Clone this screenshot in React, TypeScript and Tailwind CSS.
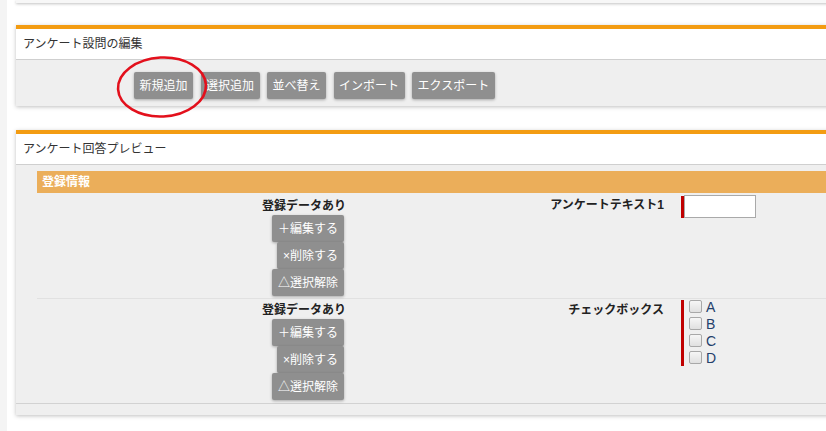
import React from 'react';

const font = { fontFamily: '"Liberation Sans", "Noto Sans CJK JP", sans-serif' };

function GrayButton({ children, className = '' }: { children: React.ReactNode; className?: string }) {
  return (
    <div
      className={`h-[27px] flex items-center bg-[#8f8f8f] text-white text-[12px] rounded-[2px] shadow-[0_1px_3px_rgba(0,0,0,0.3)] whitespace-nowrap ${className}`}
    >
      {children}
    </div>
  );
}

function PanelHeader({ title }: { title: string }) {
  return (
    <div className="h-[31px] flex items-center pl-[7px] text-[12px] text-[#333] bg-white border-b border-[#cfcfcf]">
      {title}
    </div>
  );
}

function RowActions() {
  return (
    <div className="flex flex-col items-end w-[72px] ml-[8px]">
      <GrayButton className="px-[6px]">＋編集する</GrayButton>
      <GrayButton className="px-[6px]">×削除する</GrayButton>
      <GrayButton className="px-[6px]">△選択解除</GrayButton>
    </div>
  );
}

function Checkbox({ label }: { label: string }) {
  return (
    <div className="h-[17px] flex items-center">
      <span className="w-[13px] h-[13px] rounded-[2px] border border-[#a8a8a8] bg-gradient-to-b from-[#f6f6f6] to-[#e0e0e0]" />
      <span className="ml-[4px] text-[14px] text-[#24406b] leading-none">{label}</span>
    </div>
  );
}

export default function App() {
  return (
    <div className="w-[826px] h-[431px] overflow-hidden bg-white flex" style={font}>
      <div className="w-[7px] bg-[#f4f4f4] shrink-0" />
      <div className="flex-1 relative">
        {/* previous panel remnant */}
        <div className="ml-[9px] w-[830px] h-[3px] bg-[#f7f7f7] shadow-[0_1px_3px_rgba(0,0,0,0.25)]" />

        {/* 設問の編集 */}
        <div className="ml-[9px] mt-[22px] w-[830px] border-t-4 border-[#f39c12] shadow-[0_1px_4px_rgba(0,0,0,0.25)]">
          <PanelHeader title="アンケート設問の編集" />
          <div className="bg-[#efefef] pl-[118px] pt-[12px] pb-[7px] flex gap-[7.5px]">
            <GrayButton className="px-[5.5px]">新規追加</GrayButton>
            <GrayButton className="px-[5.5px]">選択追加</GrayButton>
            <GrayButton className="px-[5.5px]">並べ替え</GrayButton>
            <GrayButton className="px-[5.5px]">インポート</GrayButton>
            <GrayButton className="px-[5.5px]">エクスポート</GrayButton>
          </div>
        </div>

        {/* 回答プレビュー */}
        <div className="ml-[9px] mt-[24px] w-[830px] border-t-4 border-[#f39c12] shadow-[0_1px_4px_rgba(0,0,0,0.25)]">
          <PanelHeader title="アンケート回答プレビュー" />
          <div className="bg-[#efefef] pt-[6px]">
            <div className="ml-[21px]">
              <div className="h-[22px] bg-[#ebae5a] flex items-center pl-[5px] text-white text-[12px] font-bold">
                登録情報
              </div>

              {/* row 1 */}
              <div className="h-[106px] flex border-b border-[#e1e1e1]">
                <div className="w-[480px] pl-[54px] pt-[5px] flex flex-col items-center">
                  <div className="text-[12px] leading-[16px] font-bold text-[#222] mb-[1px]">登録データあり</div>
                  <RowActions />
                </div>
                <div className="w-[158px] pt-[4px] pr-[11px] text-right text-[12px] leading-[16px] font-bold text-[#222]">
                  アンケートテキスト1
                </div>
                <div className="pl-[6px] pt-[2px] flex items-start">
                  <span className="w-[3px] h-[22px] mt-[1px] bg-[#c00000]" />
                  <span className="w-[72px] h-[23px] bg-white border border-[#a9a9a9]" />
                </div>
              </div>

              {/* row 2 */}
              <div className="h-[104px] flex">
                <div className="w-[480px] pl-[54px] pt-[3px] flex flex-col items-center">
                  <div className="text-[12px] leading-[16px] font-bold text-[#222] mb-[1px]">登録データあり</div>
                  <RowActions />
                </div>
                <div className="w-[158px] pt-[3px] pr-[11px] text-right text-[12px] leading-[16px] font-bold text-[#222]">
                  チェックボックス
                </div>
                <div className="pl-[6px] pt-[1px] flex items-start">
                  <span className="w-[3px] h-[66px] bg-[#c00000]" />
                  <div className="ml-[5px] -mt-[2px] flex flex-col">
                    <Checkbox label="A" />
                    <Checkbox label="B" />
                    <Checkbox label="C" />
                    <Checkbox label="D" />
                  </div>
                </div>
              </div>
            </div>
            <div className="border-t border-[#d2d2d2] h-[12px]" />
          </div>
        </div>

        {/* red annotation circle */}
        <svg className="absolute left-[106px] top-[54px] pointer-events-none" width="98" height="66" viewBox="0 0 98 66">
          <ellipse cx="49" cy="33" rx="44" ry="29.5" fill="none" stroke="#e3101c" strokeWidth="2.6" transform="rotate(-3 49 33)" />
        </svg>
      </div>
    </div>
  );
}
